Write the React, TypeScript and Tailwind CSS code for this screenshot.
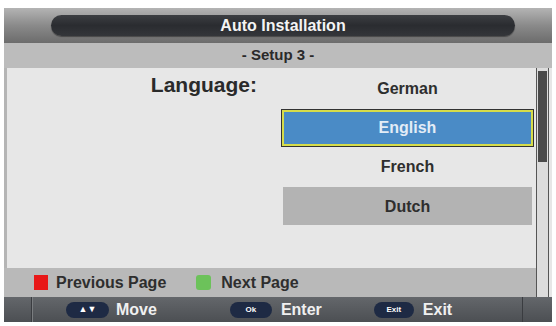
import React from "react";

const font = { fontFamily: '"Liberation Sans", Arial, sans-serif' };

function Pill({ children, w }: { children: React.ReactNode; w: string }) {
  return (
    <div
      className={`${w} h-[16px] rounded-full bg-[#1e2a44] flex items-center justify-center text-white font-bold`}
    >
      {children}
    </div>
  );
}

export default function App() {
  return (
    <div className="w-[556px] h-[326px] bg-white pt-[8px] px-[4px]" style={font}>
      <div className="w-[548px] h-[314px] flex flex-col bg-[#e7e7e7]">
        {/* Header */}
        <div className="h-[35px] bg-gradient-to-b from-[#b4b4b4] via-[#8a8a8a] to-[#6c6c6c] pt-[7px] pl-[47px] pr-[37px]">
          <div className="h-[21px] rounded-full bg-gradient-to-b from-[#3c3e42] via-[#2a2c30] to-[#34363a] flex items-center justify-center text-[#f4f4f4] font-bold text-[16px] shadow-[0_1px_1px_rgba(0,0,0,0.4)]">
            Auto Installation
          </div>
        </div>
        {/* Setup band */}
        <div className="h-[25px] bg-[#bcbcbc] flex items-center justify-center text-[#2a2a2a] font-bold text-[15px]">
          - Setup 3 -
        </div>
        {/* Middle */}
        <div className="flex flex-1 min-h-0">
          <div className="flex-1 flex flex-col">
            <div className="h-[200px] flex border-l-[3px] border-[#b5b5b5]">
              <div className="w-[274px] flex justify-end pr-[24px] pt-[5px]">
                <span className="text-[21px] leading-[24px] font-bold text-[#2a2a2a]">Language:</span>
              </div>
              <div className="w-[253px] flex flex-col gap-[1px] pt-[2px]">
                <div className="h-[38px] flex items-center justify-center text-[16px] font-bold text-[#2e2e2e]">
                  German
                </div>
                <div className="h-[38px] border border-[#333] p-[0px]">
                  <div className="h-full border-2 border-[#d6dc4a] bg-[#4a8bc6] flex items-center justify-center text-[16px] font-bold text-[#e2ecf6]">
                    English
                  </div>
                </div>
                <div className="h-[38px] flex items-center justify-center text-[16px] font-bold text-[#2e2e2e]">
                  French
                </div>
                <div className="h-[38px] mx-[2px] bg-[#b3b3b3] flex items-center justify-center text-[16px] font-bold text-[#2e2e2e] pt-[2px]">
                  Dutch
                </div>
              </div>
            </div>
            <div className="flex-1 bg-[#b9b9b9] flex items-center pl-[30px] text-[16px] font-bold text-[#2e2e2e]">
              <div className="w-[14px] h-[15px] bg-[#e81818]" />
              <span className="ml-[8px]">Previous Page</span>
              <div className="ml-[30px] w-[15px] h-[15px] rounded-[3px] bg-[#6cc25a]" />
              <span className="ml-[10px]">Next Page</span>
            </div>
          </div>
          {/* Scrollbar */}
          <div className="w-[13px] flex">
            <div className="w-[13px] h-full border-x border-[#555] bg-[#dcdcdc] pt-[3px] px-[1px]">
              <div className="h-[91px] bg-[#4a4a4a]" />
            </div>
          </div>
          <div className="w-[3px] bg-[#e7e7e7]" />
        </div>
        {/* Bottom bar */}
        <div className="h-[25px] flex bg-gradient-to-b from-[#64676b] to-[#4c4f53] text-white">
          <div className="w-[28px] border-r border-[#3a3c40]" />
          <div className="flex-1 flex items-center border-l border-[#7a7d80]">
            <div className="ml-[33px]">
              <Pill w="w-[43px]">
                <span className="text-[9px] leading-none">▲▼</span>
              </Pill>
            </div>
            <span className="ml-[7px] text-[16px] font-bold text-[#f0f0f0]">Move</span>
            <div className="ml-[73px]">
              <Pill w="w-[42px]">
                <span className="text-[8px] leading-none">Ok</span>
              </Pill>
            </div>
            <span className="ml-[9px] text-[16px] font-bold text-[#f0f0f0]">Enter</span>
            <div className="ml-[52px]">
              <Pill w="w-[40px]">
                <span className="text-[8px] leading-none">Exit</span>
              </Pill>
            </div>
            <span className="ml-[9px] text-[16px] font-bold text-[#f0f0f0]">Exit</span>
          </div>
          <div className="w-[30px] border-l border-[#3a3c40]" />
        </div>
      </div>
    </div>
  );
}
